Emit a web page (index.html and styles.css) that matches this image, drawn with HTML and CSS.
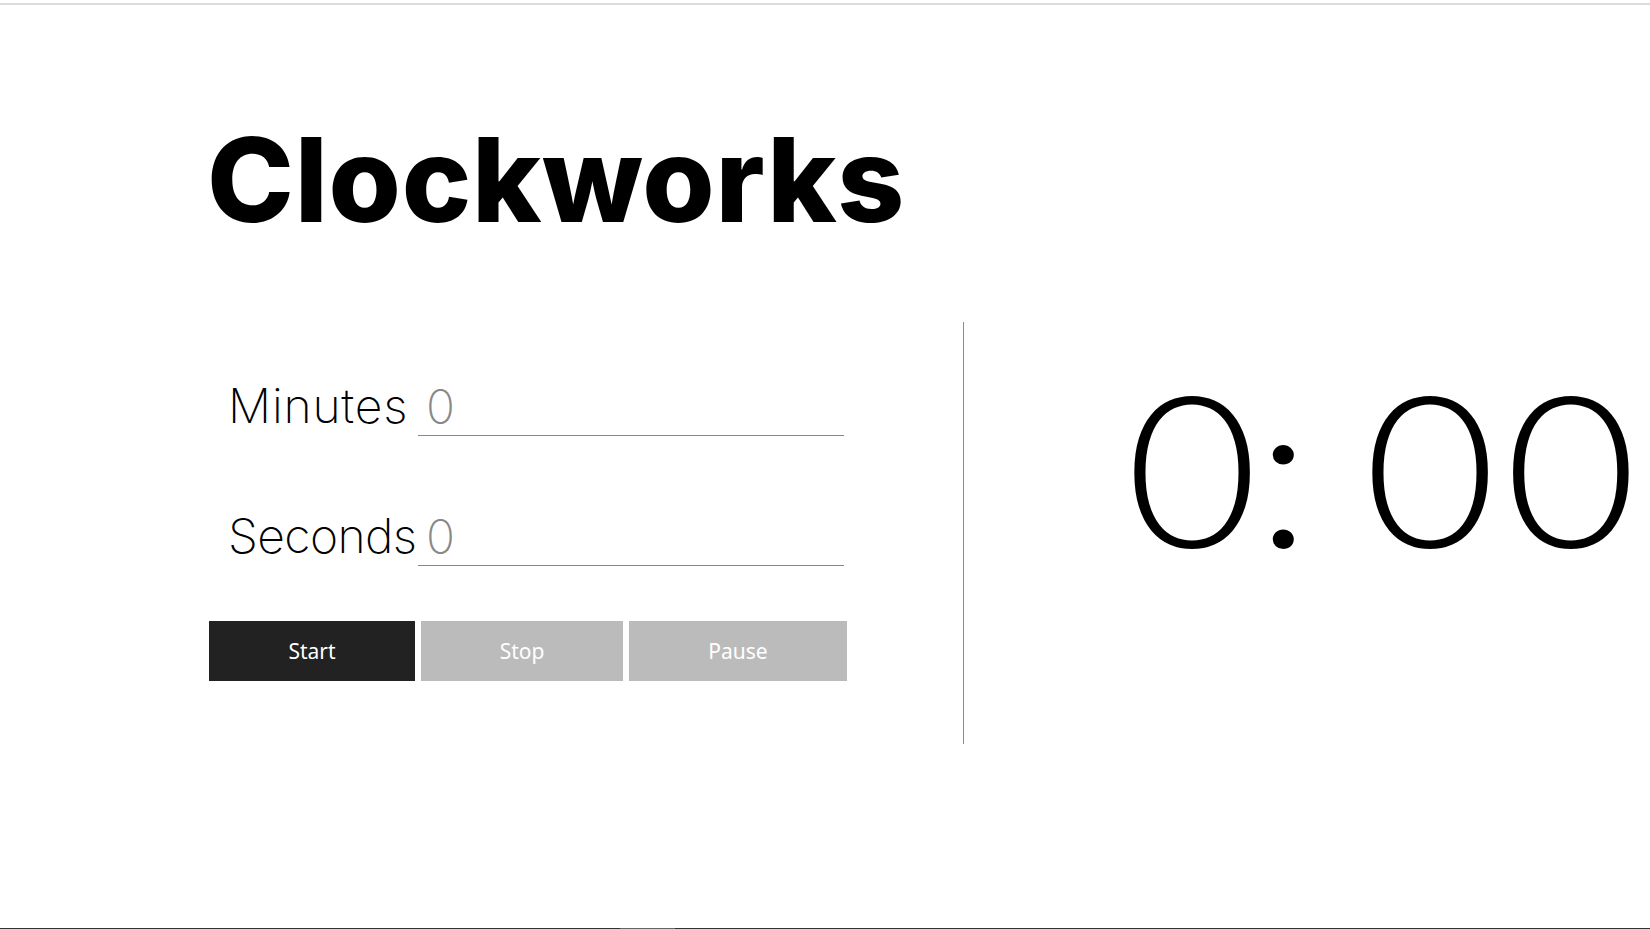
FILE: index.html
```html
<!DOCTYPE html>
<html lang="en">
<head>
<meta charset="utf-8">
<title>Clockworks</title>
<link rel="stylesheet" href="styles.css">
</head>
<body>
<div class="page">
  <div class="topline"></div>
  <main class="main">
    <h1 class="title">Clockworks</h1>
    <div class="content">
      <section class="controls">
        <div class="field">
          <label class="label label-min" for="min">Minutes</label>
          <input class="input" id="min" type="text" value="0">
        </div>
        <div class="field">
          <label class="label label-sec" for="sec">Seconds</label>
          <input class="input" id="sec" type="text" value="0">
        </div>
        <div class="buttons">
          <button class="btn btn-start">Start</button>
          <button class="btn btn-stop">Stop</button>
          <button class="btn btn-pause">Pause</button>
        </div>
      </section>
      <div class="divider"></div>
      <section class="timer">
        <span class="time"><span class="mins">0</span>: <span class="secs">00</span></span>
      </section>
    </div>
  </main>
  <div class="bottomline"><span class="bl-seg"></span></div>
</div>
</body>
</html>
```
FILE: styles.css
```css
html, body {
  margin: 0;
  padding: 0;
  background: #ffffff;
}
.page {
  height: 929px;
  display: flex;
  flex-direction: column;
  overflow: hidden;
}
.topline {
  margin-top: 3px;
  height: 2px;
  background: #dcdce0;
  flex: none;
}
.main {
  flex: 1;
  padding-left: 209px;
  min-height: 0;
}
.title {
  margin: 0 0 0 -2px;
  padding-top: 116px;
  font-family: "Inter", "Liberation Sans", sans-serif;
  font-weight: 800;
  font-size: 117px;
  line-height: 1;
  letter-spacing: 0.7px;
  color: #000;
}
.content {
  display: flex;
  margin-top: 84px;
}
.controls {
  width: 638px;
  padding-top: 52px;
  flex: none;
}
.field {
  display: grid;
  grid-template-columns: 209px 426px;
  align-items: end;
  height: 62px;
}
.field + .field {
  margin-top: 68px;
}
.label {
  padding-left: 19px;
  padding-bottom: 6px;
  font-family: "Inter", "Liberation Sans", sans-serif;
  font-weight: 200;
  font-size: 48px;
  line-height: 1;
  color: #000;
  white-space: nowrap;
}
.label-min { letter-spacing: 0.8px; }
.label-sec { letter-spacing: -0.6px; }
.input {
  box-sizing: border-box;
  width: 426px;
  height: 62px;
  border: none;
  border-bottom: 1px solid #888;
  padding: 4px 0 0 8px;
  margin: 0;
  font-family: "Inter", "Liberation Sans", sans-serif;
  font-weight: 200;
  font-size: 48px;
  color: #888;
  background: transparent;
  outline: none;
}
.buttons {
  display: flex;
  gap: 6px;
  margin-top: 55px;
}
.btn {
  height: 60px;
  border: none;
  margin: 0;
  padding: 0;
  font-family: "Noto Sans", "Open Sans", sans-serif;
  font-size: 21px;
  color: #fff;
  cursor: pointer;
}
.btn-start { width: 206px; background: #222222; }
.btn-stop { width: 202px; background: #bbbbbb; }
.btn-pause { width: 218px; background: #bbbbbb; }
.divider {
  width: 1px;
  height: 422px;
  background: #8c8c8c;
  margin-left: 116px;
  flex: none;
}
.timer {
  flex: 1;
  padding-left: 162px;
  padding-top: 37px;
}
.time {
  display: inline-block;
  font-family: "Lato", "Liberation Sans", sans-serif;
  font-weight: 300;
  font-size: 212px;
  line-height: 1;
  color: #000;
  white-space: nowrap;
  word-spacing: -8px;
  transform: scaleX(1.075);
  transform-origin: 0 0;
}
.mins {
  margin-right: -2px;
}
.secs {
  letter-spacing: 8px;
}
.bottomline {
  height: 1px;
  background: #333;
  flex: none;
  display: flex;
}
.bl-seg {
  margin-left: 620px;
  width: 55px;
  background: #666;
}
```
